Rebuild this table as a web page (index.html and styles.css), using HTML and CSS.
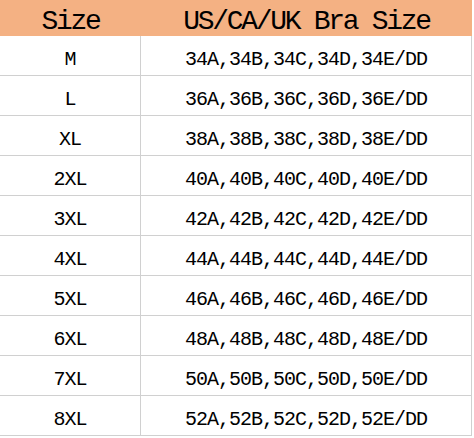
FILE: index.html
```html
<!DOCTYPE html>
<html>
<head>
<meta charset="utf-8">
<link rel="stylesheet" href="styles.css">
</head>
<body>
<div class="chart">
  <div class="hcell">Size</div>
  <div class="hcell">US/CA/UK Bra Size</div>
  <div class="cell">M</div><div class="cell">34A,34B,34C,34D,34E/DD</div>
  <div class="cell">L</div><div class="cell">36A,36B,36C,36D,36E/DD</div>
  <div class="cell">XL</div><div class="cell">38A,38B,38C,38D,38E/DD</div>
  <div class="cell">2XL</div><div class="cell">40A,40B,40C,40D,40E/DD</div>
  <div class="cell">3XL</div><div class="cell">42A,42B,42C,42D,42E/DD</div>
  <div class="cell">4XL</div><div class="cell">44A,44B,44C,44D,44E/DD</div>
  <div class="cell">5XL</div><div class="cell">46A,46B,46C,46D,46E/DD</div>
  <div class="cell">6XL</div><div class="cell">48A,48B,48C,48D,48E/DD</div>
  <div class="cell">7XL</div><div class="cell">50A,50B,50C,50D,50E/DD</div>
  <div class="cell">8XL</div><div class="cell">52A,52B,52C,52D,52E/DD</div>
</div>
</body>
</html>
```
FILE: styles.css
```css
html, body {
  margin: 0;
  padding: 0;
  background: #ffffff;
}
.chart {
  display: grid;
  grid-template-columns: 141px 331px;
  width: 472px;
  font-family: "Liberation Mono", "Courier New", monospace;
  color: #000;
}
.hcell {
  background: #f4b183;
  height: 36px;
  box-sizing: border-box;
  padding-top: 8px;
  font-size: 28px;
  letter-spacing: -2.3px;
  line-height: 28px;
  text-align: center;
}
.cell {
  height: 40px;
  box-sizing: border-box;
  border-bottom: 1px solid #d0d0d0;
  border-right: 1px solid #d0d0d0;
  padding-top: 9px;
  font-size: 20px;
  letter-spacing: -1px;
  line-height: 30px;
  text-align: center;
}
```
